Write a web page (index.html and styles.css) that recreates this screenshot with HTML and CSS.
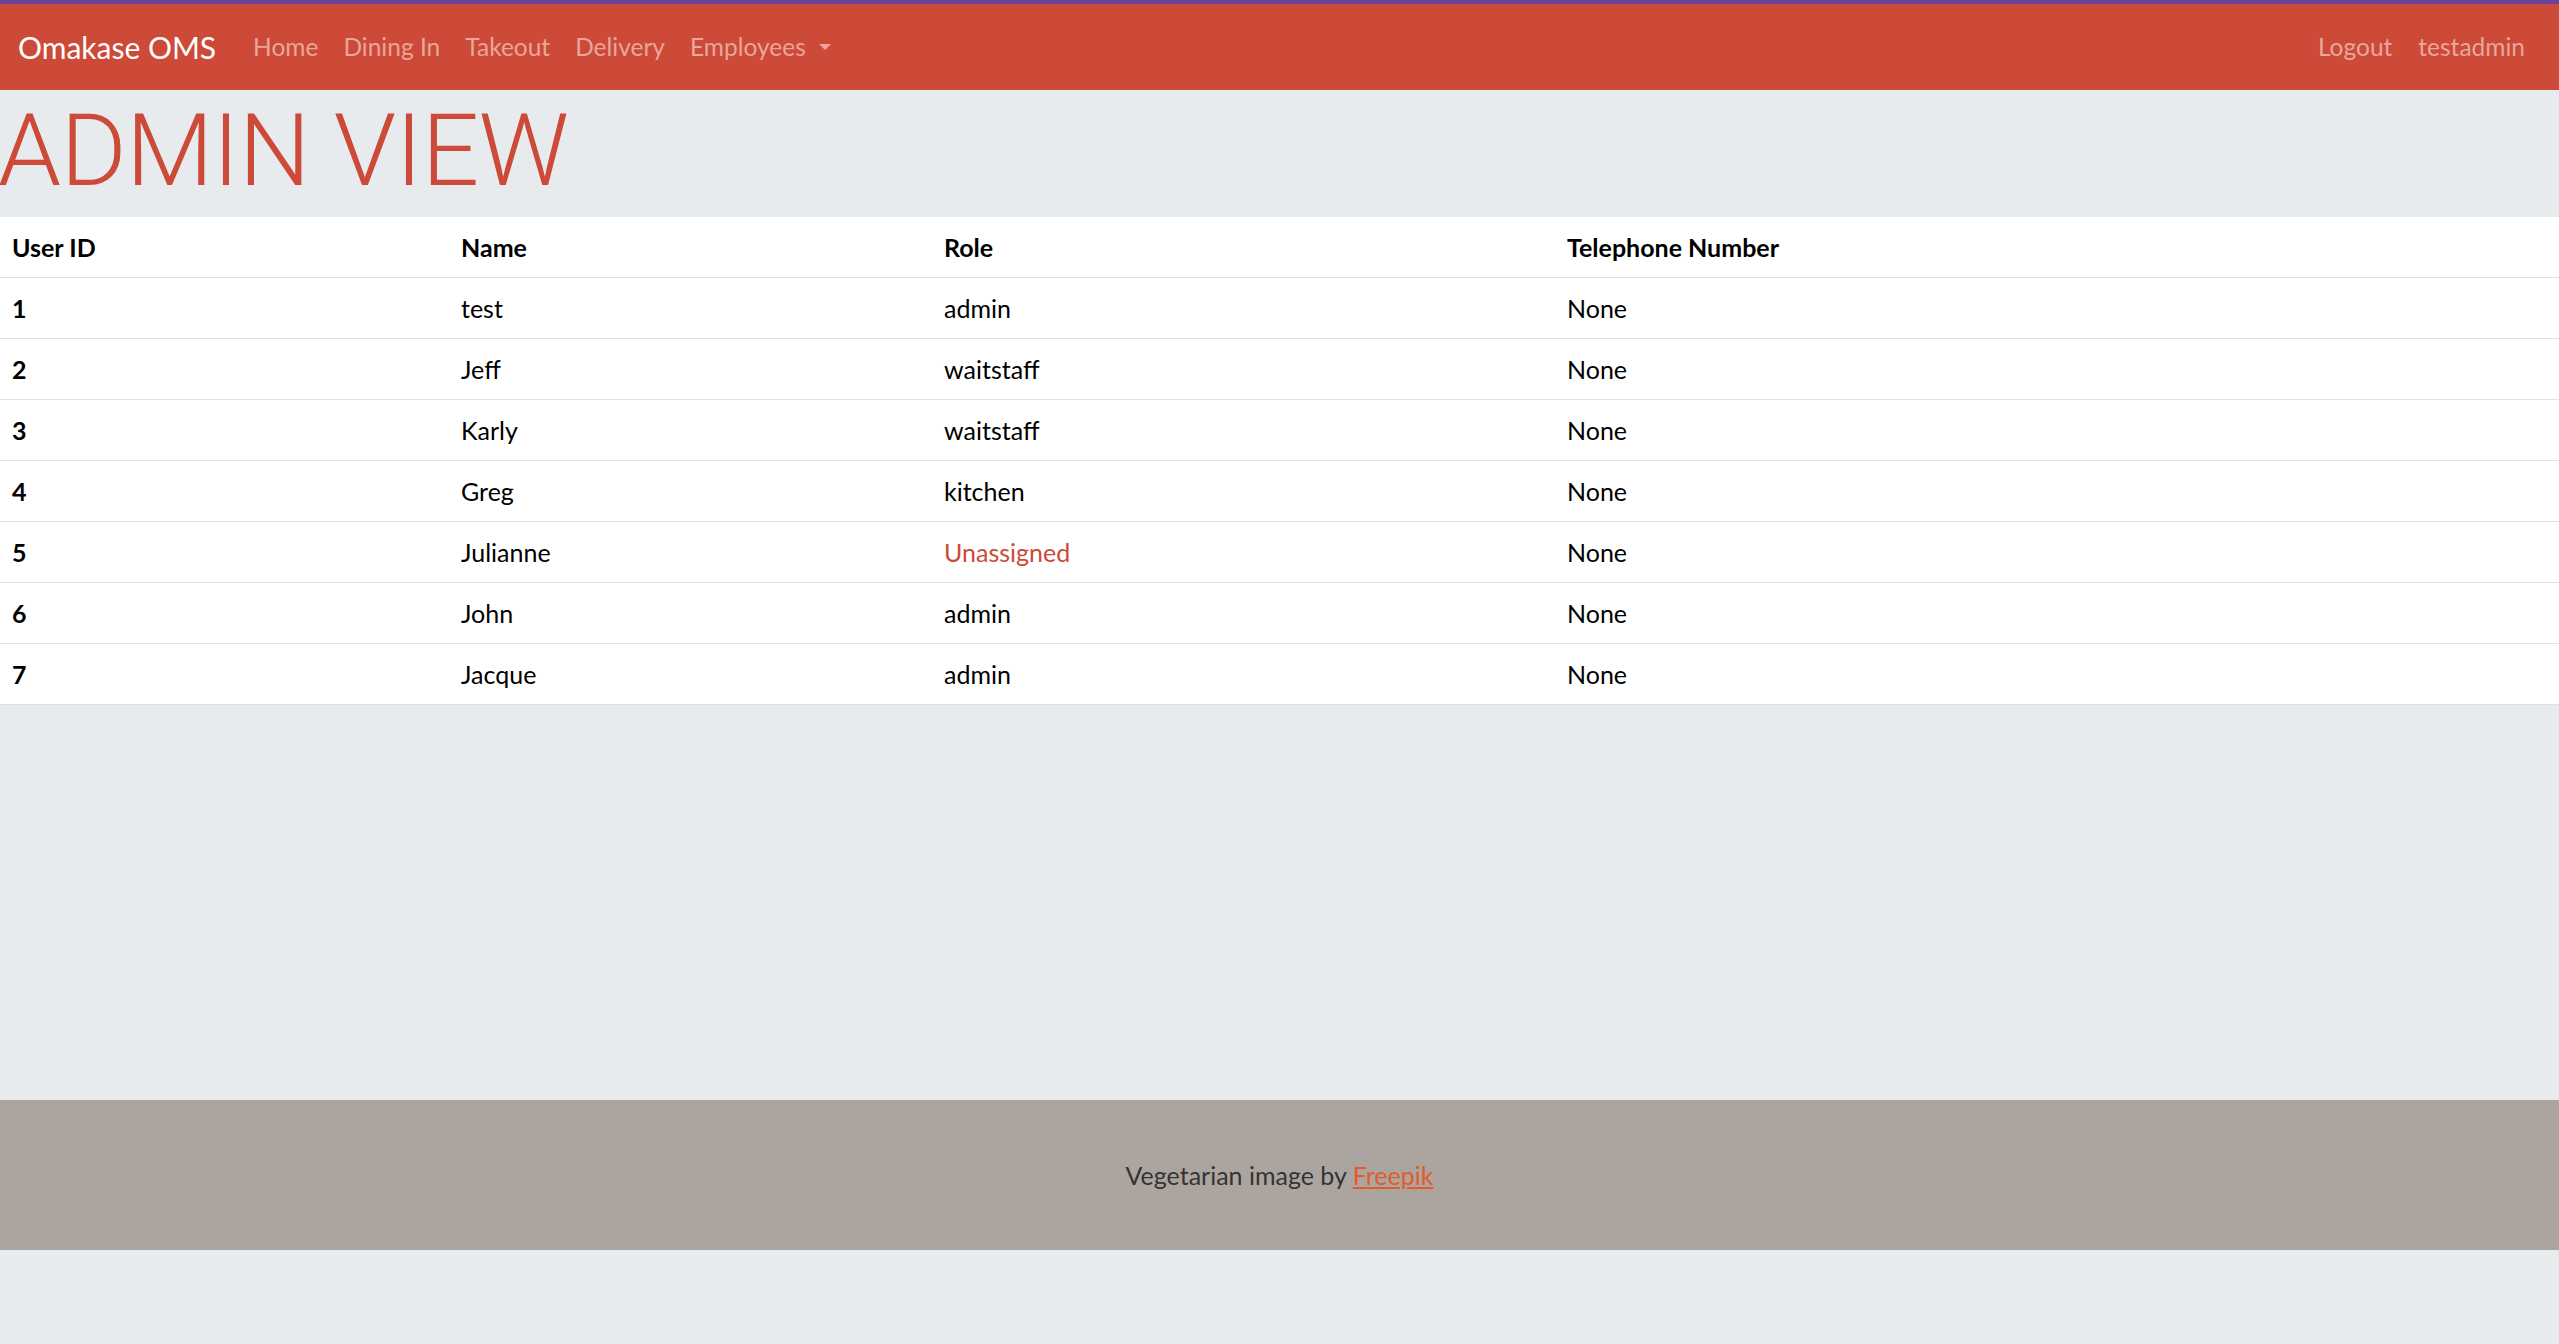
FILE: index.html
```html
<!DOCTYPE html>
<html lang="en">
<head>
<meta charset="utf-8">
<title>Omakase OMS - Admin View</title>
<link rel="stylesheet" href="styles.css">
</head>
<body>
<nav class="navbar">
  <a class="brand" href="#">Omakase OMS</a>
  <ul class="nav-links">
    <li><a href="#">Home</a></li>
    <li><a href="#">Dining In</a></li>
    <li><a href="#">Takeout</a></li>
    <li><a href="#">Delivery</a></li>
    <li><a href="#" class="dropdown">Employees<span class="caret"></span></a></li>
  </ul>
  <ul class="nav-links nav-right">
    <li><a href="#">Logout</a></li>
    <li><a href="#">testadmin</a></li>
  </ul>
</nav>

<main class="content">
  <h1 class="page-title">ADMIN VIEW</h1>
  <table class="users">
    <thead>
      <tr>
        <th class="col-id">User ID</th>
        <th class="col-name">Name</th>
        <th class="col-role">Role</th>
        <th class="col-tel">Telephone Number</th>
      </tr>
    </thead>
    <tbody>
      <tr><th>1</th><td>test</td><td>admin</td><td>None</td></tr>
      <tr><th>2</th><td>Jeff</td><td>waitstaff</td><td>None</td></tr>
      <tr><th>3</th><td>Karly</td><td>waitstaff</td><td>None</td></tr>
      <tr><th>4</th><td>Greg</td><td>kitchen</td><td>None</td></tr>
      <tr><th>5</th><td>Julianne</td><td class="unassigned">Unassigned</td><td>None</td></tr>
      <tr><th>6</th><td>John</td><td>admin</td><td>None</td></tr>
      <tr><th>7</th><td>Jacque</td><td>admin</td><td>None</td></tr>
    </tbody>
  </table>
</main>

<footer class="footer">
  <p>Vegetarian image by <a href="#">Freepik</a></p>
</footer>
</body>
</html>
```

FILE: styles.css
```css
* {
  box-sizing: border-box;
}

html, body {
  margin: 0;
  padding: 0;
}

body {
  background: #e8ebee;
  font-family: Lato, "Open Sans", "Liberation Sans", sans-serif;
  color: #000;
  min-height: 1344px;
}

a {
  text-decoration: none;
}

/* ---------- navbar ---------- */
.navbar {
  display: flex;
  align-items: center;
  height: 90px;
  border-top: 4px solid #69449b;
  background: #cc4a37;
  padding: 0 34px 0 18px;
}

.brand {
  color: #fff;
  font-size: 30px;
  line-height: 40px;
  margin-right: 37px;
  white-space: nowrap;
}

.nav-links {
  display: flex;
  align-items: center;
  gap: 25px;
  list-style: none;
  margin: 0;
  padding: 0;
}

.nav-links a {
  color: #e8a69c;
  font-size: 24.5px;
  line-height: 36px;
  white-space: nowrap;
  display: inline-flex;
  align-items: center;
}

.nav-right {
  margin-left: auto;
  gap: 26px;
}

.caret {
  display: inline-block;
  width: 0;
  height: 0;
  margin-left: 13px;
  border-top: 6px solid #e8a69c;
  border-left: 6px solid transparent;
  border-right: 6px solid transparent;
}

/* ---------- heading ---------- */
.content {
  padding-bottom: 395px;
}

.page-title {
  margin: 0 0 0 -2px;
  padding: 2px 0 8px;
  color: #cc4a37;
  font-family: Roboto, Lato, sans-serif;
  font-weight: 300;
  font-size: 101px;
  line-height: 117px;
  letter-spacing: -0.7px;
}

/* ---------- table ---------- */
.users {
  width: 100%;
  border-collapse: collapse;
  background: #fff;
  font-size: 25px;
  line-height: 36px;
  table-layout: fixed;
}

.users th,
.users td {
  padding: 12px;
  text-align: left;
  vertical-align: top;
  border-bottom: 1px solid #dee2e6;
  white-space: nowrap;
}

.users th {
  font-weight: 700;
}

.users td {
  font-weight: 400;
}

.col-id { width: 449px; }
.col-name { width: 483px; }
.col-role { width: 623px; }
.col-tel { width: auto; }

.unassigned {
  color: #cc4a37;
}

/* ---------- footer ---------- */
.footer {
  height: 150px;
  background: #aca59f;
  display: flex;
  align-items: center;
  justify-content: center;
}

.footer p {
  margin: 0;
  color: #343434;
  font-size: 25px;
  line-height: 34px;
}

.footer a {
  color: #e15b2b;
  text-decoration: underline;
}
```
